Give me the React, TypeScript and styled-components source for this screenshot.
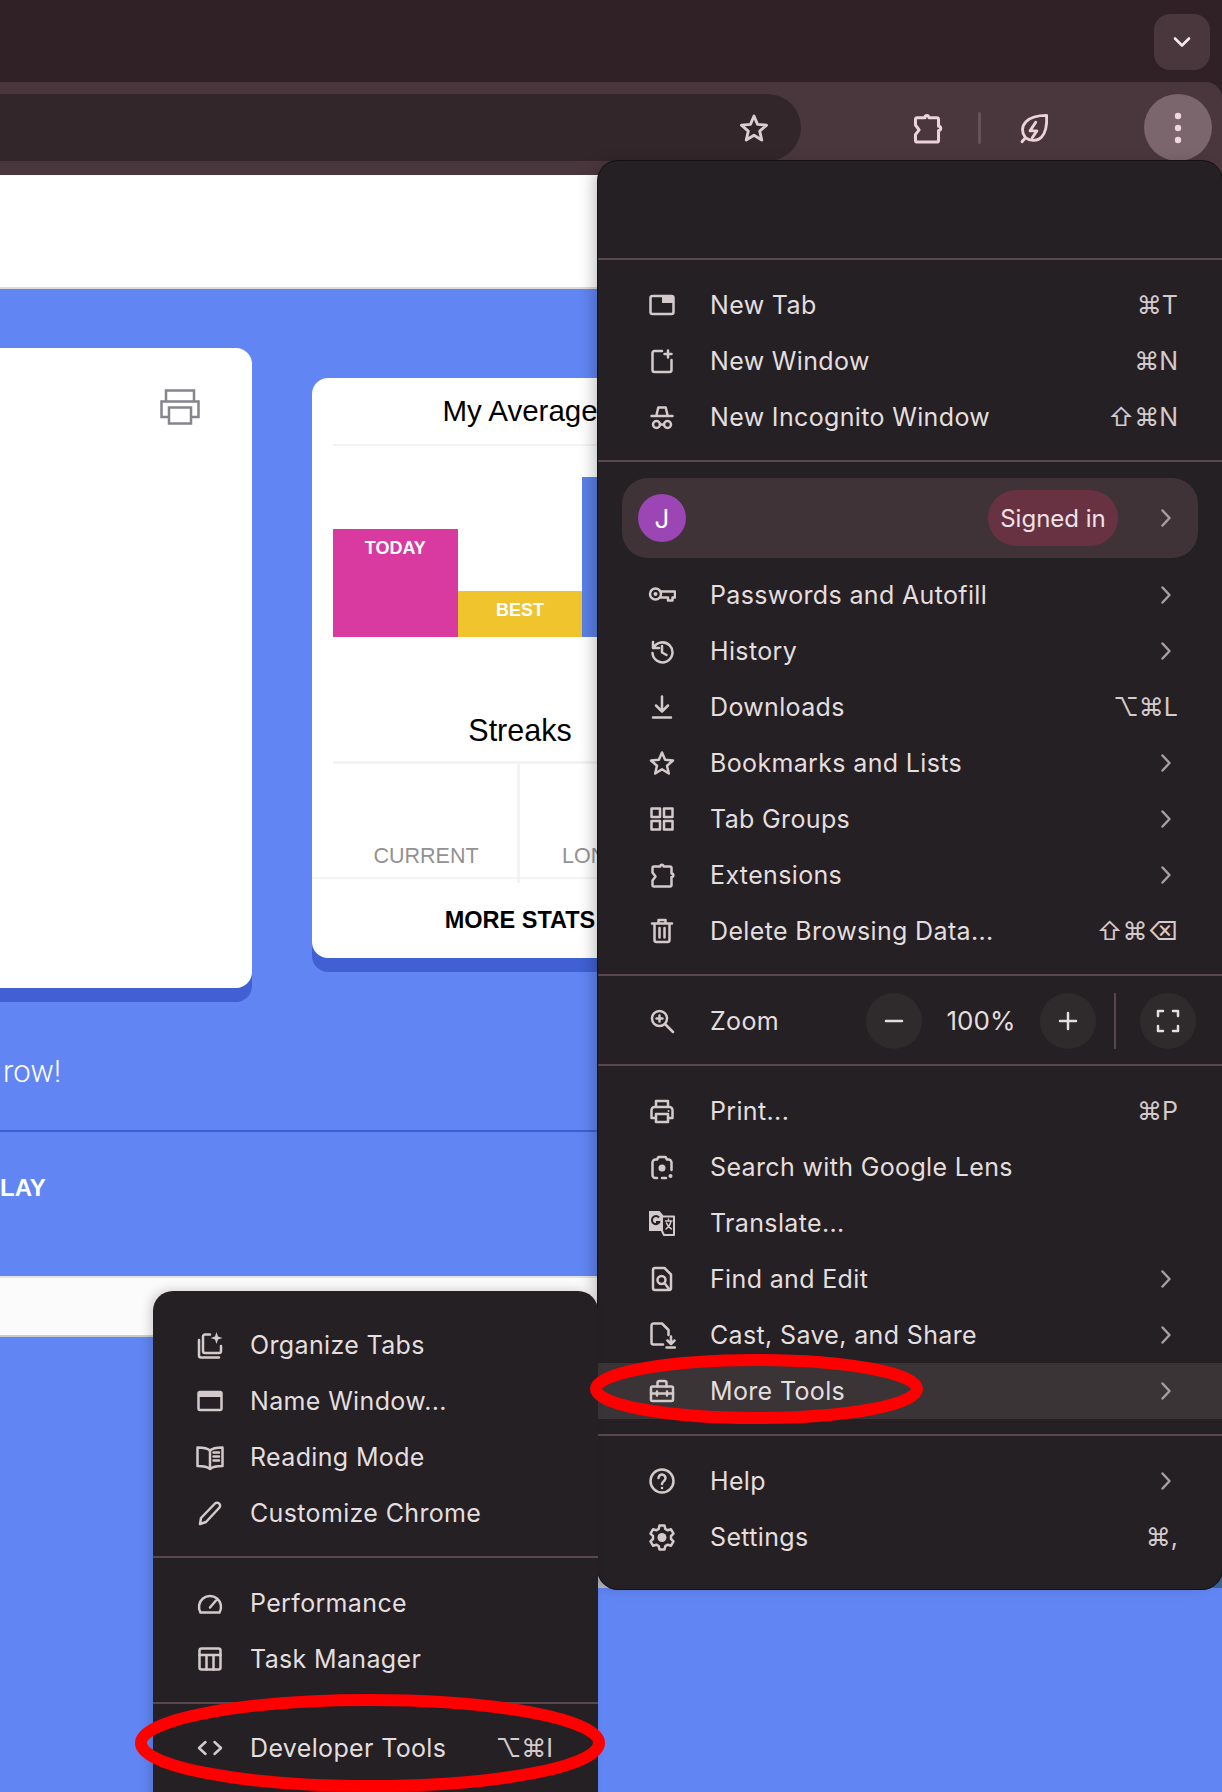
import React from 'react'
import styled, { createGlobalStyle } from 'styled-components'

const GlobalStyle = createGlobalStyle`
    html, body {
        margin: 0;
        padding: 0;
        background: #6186f3;
    }
`

const NEWS_FONT = `"Liberation Sans", Arial, sans-serif`
const MENU_FONT = `Inter, "DejaVu Sans", sans-serif`

const Page = styled.div`
    position: relative;
    width: 1222px;
    height: 1792px;
    overflow: hidden;
    background: #6186f3;
    font-family: ${NEWS_FONT};
`

/* browser chrome */

const BrowserBar = styled.header`
    background: #2f2125;
`

const TabStrip = styled.div`
    height: 82px;
    box-sizing: border-box;
    padding: 14px 12px 0 0;
    display: flex;
    justify-content: flex-end;
`

const TabSearch = styled.div`
    width: 56px;
    height: 56px;
    border-radius: 16px;
    background: #4a373d;
    color: #f3e9ec;
    display: grid;
    place-items: center;
`

const Toolbar = styled.div`
    height: 93px;
    box-sizing: border-box;
    padding: 12px 10px 0 0;
    display: flex;
    align-items: flex-start;
    background: #4a373d;
    border-top-right-radius: 16px;
`

const Omnibox = styled.div`
    width: 801px;
    height: 67px;
    box-sizing: border-box;
    padding-right: 31px;
    display: flex;
    align-items: center;
    justify-content: flex-end;
    background: #33262a;
    border-radius: 0 34px 34px 0;
    color: #dccdd1;
`

const ToolbarSlot = styled.div<{ $left: number }>`
    margin-left: ${(p) => p.$left}px;
    height: 67px;
    display: flex;
    align-items: center;
    color: #ecd2d9;
`

const ToolbarDivider = styled.div`
    width: 3px;
    height: 32px;
    background: #65525a;
    border-radius: 2px;
`

const DotsButton = styled.div`
    margin-left: auto;
    width: 68px;
    height: 67px;
    border-radius: 50%;
    background: #7a666c;
    color: #f0d8de;
    display: grid;
    place-items: center;
`

/* page behind the menus */

const HeaderBand = styled.div`
    height: 114px;
    box-sizing: border-box;
    background: #fff;
    border-bottom: 2px solid #dcdcdc;
`

const Stage = styled.main`
    height: 987px;
    box-sizing: border-box;
    padding-top: 59px;
`

const CardRow = styled.div`
    display: flex;
    align-items: flex-start;
    gap: 60px;
`

const PrintCard = styled.section`
    width: 252px;
    height: 640px;
    box-sizing: border-box;
    padding: 41px 52px 0 0;
    display: flex;
    justify-content: flex-end;
    align-items: flex-start;
    flex-shrink: 0;
    background: #fff;
    border-radius: 0 16px 16px 0;
    box-shadow: 0 14px 0 #4060d4;
    color: #85848f;
`

const StatsCard = styled.section`
    width: 416px;
    height: 580px;
    margin-top: 30px;
    flex-shrink: 0;
    display: flex;
    flex-direction: column;
    background: #fff;
    border-radius: 16px;
    box-shadow: 0 14px 0 #4060d4;
`

const CardTitle = styled.h2<{ $top: number; $height: number; $rule: number; $size: number }>`
    margin: ${(p) => p.$top}px 21px 0;
    height: ${(p) => p.$height}px;
    box-sizing: border-box;
    line-height: ${(p) => p.$height - p.$rule}px;
    border-bottom: ${(p) => p.$rule}px solid #f3f3f3;
    font-size: ${(p) => p.$size}px;
    font-weight: 400;
    text-align: center;
    color: #000;
`

const BarChart = styled.div`
    height: 191px;
    margin: 0 21px;
    display: flex;
    align-items: flex-end;
`

const Bar = styled.div<{ $height: number; $color: string }>`
    flex: 1;
    height: ${(p) => p.$height}px;
    background: ${(p) => p.$color};
    color: #fff;
    font-size: 18px;
    font-weight: 700;
    line-height: 38px;
    text-align: center;
`

const StreakGrid = styled.div`
    height: 113px;
    margin-left: 21px;
    display: grid;
    grid-template-columns: 184px 1fr;
`

const StreakCell = styled.div`
    display: flex;
    align-items: flex-end;
    justify-content: center;
    padding: 0 0 7px 2px;
    font-size: 21.5px;
    line-height: 28px;
    color: #929292;

    & + & {
        justify-content: flex-start;
        border-left: 3px solid #f3f3f3;
        margin-bottom: -6px;
        padding: 0 0 13px 42px;
    }
`

const MoreStats = styled.div`
    flex: 1;
    padding-top: 4px;
    border-top: 2px solid #f3f3f3;
    display: grid;
    place-items: center;
    font-size: 23.5px;
    font-weight: 700;
    color: #000;
`

const Note = styled.p`
    margin: 64px 0 0;
    padding-left: 3px;
    height: 40px;
    line-height: 40px;
    font-family: Roboto, sans-serif;
    font-weight: 300;
    font-size: 31px;
    color: #fff;
`

const Rule = styled.hr`
    margin: 38px 0;
    border: 0;
    border-top: 2px solid #3d5fd4;
`

const PlayLabel = styled.div`
    height: 36px;
    line-height: 36px;
    font-size: 24px;
    font-weight: 700;
    color: #fff;
`

const FooterStrip = styled.div`
    height: 61px;
    box-sizing: border-box;
    background: #fbfbfb;
    border-top: 2px solid #e4e4e4;
    border-bottom: 2px solid #cccccc;
`

/* chrome menus */

const MenuCorners = styled.div`
    position: absolute;
    top: 1569px;
    left: 598px;
    width: 624px;
    height: 19px;
    background: linear-gradient(90deg, #b4b9c6 0 22px, #252023 22px 600px, #3f6391 600px);
`

const MainMenu = styled.nav`
    position: absolute;
    top: 161px;
    left: 598px;
    width: 624px;
    height: 1428px;
    display: flex;
    flex-direction: column;
    background: #252023;
    border-radius: 20px;
    box-shadow: 0 0 0 1px #141113, -8px 0 16px -4px rgba(0, 0, 0, 0.25);
    font-family: ${MENU_FONT};
`

const SubMenu = styled.nav`
    position: absolute;
    top: 1291px;
    left: 153px;
    width: 445px;
    height: 540px;
    padding-top: 26px;
    box-sizing: border-box;
    display: flex;
    flex-direction: column;
    background: #252023;
    border-radius: 20px;
    box-shadow: -4px -2px 12px -2px rgba(0, 0, 0, 0.2);
    font-family: ${MENU_FONT};
`

const MenuTop = styled.div`
    height: 97px;
`

const WindowGroup = styled.div`
    padding-bottom: 15px;
`

const Section = styled.div<{ $top: number; $bottom: number }>`
    padding: ${(p) => p.$top}px 0 ${(p) => p.$bottom}px;
    border-top: 2px solid #5a474d;
`

const Row = styled.div<{ $active?: boolean; $sub?: boolean }>`
    height: 56px;
    box-sizing: border-box;
    padding: 0 ${(p) => (p.$sub ? 45 : 44)}px 0 ${(p) => (p.$sub ? 43 : 50)}px;
    display: flex;
    align-items: center;
    gap: ${(p) => (p.$sub ? 26 : 34)}px;
    background: ${(p) => (p.$active ? '#3a3437' : 'transparent')};
    color: #e3dedf;
`

const RowIcon = styled.span`
    width: 28px;
    height: 28px;
    flex-shrink: 0;
    color: #d4c9cb;
`

const RowLabel = styled.span`
    flex: 1;
    font-size: 25px;
    letter-spacing: 0.35px;
    white-space: nowrap;
`

const Shortcut = styled.span`
    font-size: 25px;
    letter-spacing: 0;
    color: #d4c9cb;
    white-space: nowrap;
`

const RowArrow = styled.span`
    width: 12px;
    height: 22px;
    margin-right: 6px;
    color: #a89ea0;
`

const ProfileRow = styled.div`
    height: 80px;
    margin: 0 24px 9px;
    box-sizing: border-box;
    padding: 0 20px 0 16px;
    display: flex;
    align-items: center;
    border-radius: 26px;
    background: #3f3337;
`

const Avatar = styled.div`
    width: 48px;
    height: 48px;
    border-radius: 50%;
    background: #9c46b5;
    color: #fff;
    font-size: 26px;
    display: grid;
    place-items: center;
`

const SignedIn = styled.div`
    margin-left: auto;
    margin-right: 42px;
    width: 130px;
    height: 56px;
    border-radius: 28px;
    background: #683242;
    color: #eee2e5;
    font-size: 24px;
    display: grid;
    place-items: center;
`

const ZoomRow = styled.div`
    height: 87px;
    box-sizing: border-box;
    padding-left: 50px;
    display: flex;
    align-items: center;
    color: #e3dedf;
`

const ZoomLabel = styled.span`
    margin-left: 34px;
    width: 156px;
    font-size: 25px;
    letter-spacing: 0.35px;
`

const ZoomButton = styled.div`
    width: 56px;
    height: 56px;
    flex-shrink: 0;
    border-radius: 50%;
    background: #2f2a2b;
    display: grid;
    place-items: center;
    color: #e3dedf;
`

const ZoomValue = styled.span`
    width: 118px;
    text-align: center;
    font-size: 26px;
`

const ZoomDivider = styled.div`
    width: 2px;
    height: 56px;
    margin: 0 24px 0 18px;
    background: #5a474d;
`

const Annotations = styled.svg`
    position: absolute;
    top: 0;
    left: 0;
    width: 1222px;
    height: 1792px;
    pointer-events: none;
`

/* icons, all on a 28 unit grid */

const Glyph = styled.svg`
    display: block;
    fill: none;
    stroke: currentColor;
    stroke-width: 2.5;
    stroke-linecap: round;
    stroke-linejoin: round;
`

const icons: Record<string, React.ReactNode> = {
    newTab: (
        <>
            <rect x="2.500" y="5" width="23" height="18" rx="2" />
            <path d="M14 5h9.500a2 2 0 0 1 2 2v5H14z" fill="currentColor" stroke="none" />
        </>
    ),
    newWindow: (
        <path d="M14 4H6.500a2 2 0 0 0-2 2v17a2 2 0 0 0 2 2h15a2 2 0 0 0 2-2V13M20 3.500v7M16.500 7h7" />
    ),
    incognito: (
        <>
            <path d="M8.500 12l1.800-7.500h7.400L19.500 12M3.500 13h21M12 21.500h4" />
            <circle cx="8.500" cy="21.500" r="3.500" />
            <circle cx="19.500" cy="21.500" r="3.500" />
        </>
    ),
    key: (
        <>
            <circle cx="7.500" cy="13" r="5.500" />
            <circle cx="7.500" cy="13" r="2" fill="currentColor" stroke="none" />
            <path d="M13 10.500h14v6h-2.500v3h-4.500v-3h-7" />
        </>
    ),
    history: <path d="M5 5v6h6M5.500 11a10 10 0 1 1-1 5M14 9v6.500l4.500 2.500" />,
    download: <path d="M14 3.500v15M8 12.500l6 6 6-6M5 24.500h18" />,
    star: (
        <path d="M14 3.500l3.100 7.300 7.900.7-6 5.200 1.800 7.800L14 20.300l-6.800 4.200 1.800-7.800-6-5.200 7.900-.7z" />
    ),
    tabGroups: (
        <>
            <rect x="3.500" y="3.500" width="8.500" height="8.500" />
            <rect x="16" y="3.500" width="8.500" height="8.500" />
            <rect x="3.500" y="16" width="8.500" height="8.500" />
            <rect x="16" y="16" width="8.500" height="8.500" />
        </>
    ),
    puzzle: (
        <path d="M6 5.500h6.300a1.700 1.700 0 0 1 3.400 0H22A1.500 1.500 0 0 1 23.500 7v5.500a1.800 1.800 0 0 1 0 3.600V24a1.500 1.500 0 0 1-1.500 1.500H6A1.500 1.500 0 0 1 4.500 24v-4.500l3-4-3-4V7A1.500 1.500 0 0 1 6 5.500z" />
    ),
    trash: (
        <path d="M4 6.500h20M10.500 6.500V3h7v3.500M6.500 6.500V23a2 2 0 0 0 2 2h11a2 2 0 0 0 2-2V6.500M11.500 11v9.500M16.500 11v9.500" />
    ),
    zoom: (
        <>
            <circle cx="11.500" cy="11.500" r="7.500" />
            <path d="M17 17l8 8M11.500 8.500v6M8.500 11.500h6" />
        </>
    ),
    print: (
        <>
            <path d="M8 10V4h12v6M8 21H3.500v-8a3 3 0 0 1 3-3h15a3 3 0 0 1 3 3v8H20" />
            <rect x="8" y="17" width="12" height="8" />
            <circle cx="20.500" cy="14" r="1" fill="currentColor" stroke="none" />
        </>
    ),
    lens: (
        <>
            <path d="M9 25H7.500a3 3 0 0 1-3-3V9.500a3 3 0 0 1 3-3H9l1.500-2.500h7L19 6.500h1.500a3 3 0 0 1 3 3V17M14 25h4" />
            <circle cx="14" cy="15" r="3.500" fill="currentColor" stroke="none" />
            <circle cx="22.500" cy="23" r="2" fill="currentColor" stroke="none" />
        </>
    ),
    translate: (
        <>
            <path d="M1 2h10.500L15 6v16H1z" fill="currentColor" stroke="none" />
            <path d="M11 8.500a4 4 0 1 0 .5 4.500H8" stroke="#252023" strokeWidth="2" strokeLinecap="butt" />
            <path d="M15 7.500h11v18.500H16l-2-4" strokeWidth="2" />
            <path d="M17.500 12h6.500M20.500 10v2M23 12c-.8 4-2.800 6.500-5 8M18.500 14c1 2.800 3 5 5 6" strokeWidth="1.500" />
        </>
    ),
    find: (
        <>
            <path d="M7 3h9.500l6.500 6.500V23a2 2 0 0 1-2 2H7a2 2 0 0 1-2-2V5a2 2 0 0 1 2-2z" />
            <circle cx="13.500" cy="15" r="4" />
            <path d="M16.500 18l4.500 6" />
        </>
    ),
    cast: (
        <path d="M15 23.500H5.500a2 2 0 0 1-2-2V4.500a2 2 0 0 1 2-2H14l6.500 6.500V14M23 15.500v7M19.500 19.500l3.500 3.500 3.500-3.500M18.500 26.500H27" />
    ),
    toolbox: (
        <>
            <path d="M9.500 9.500V6a2 2 0 0 1 2-2h5a2 2 0 0 1 2 2v3.500" />
            <rect x="3" y="9.500" width="22" height="14.500" rx="1.500" />
            <path d="M3 16.500h22M9 14.500v4M19 14.500v4" />
        </>
    ),
    help: (
        <>
            <circle cx="14" cy="14" r="11.500" />
            <path d="M10.500 11a3.500 3.500 0 1 1 6 2.500c-1.300 1.200-2.500 1.800-2.500 3.500" />
            <circle cx="14" cy="21" r="1.300" fill="currentColor" stroke="none" />
        </>
    ),
    settings: (
        <>
            <path d="M11.500 2.500h5l.8 3.400 2.400 1.400 3.300-1 2.500 4.300-2.500 2.400v3l2.500 2.400-2.500 4.300-3.300-1-2.400 1.400-.8 3.400h-5l-.8-3.400-2.400-1.400-3.300 1L2.500 18.400 5 16v-3l-2.500-2.400L5 6.300l3.300 1 2.400-1.400z" />
            <circle cx="14" cy="14.500" r="4.500" fill="currentColor" stroke="none" />
        </>
    ),
    organize: (
        <>
            <path d="M3 9v15.500a2 2 0 0 0 2 2h18M14 3.500H9a2 2 0 0 0-2 2V20a2 2 0 0 0 2 2h14a2 2 0 0 0 2-2v-5" />
            <path d="M20.500 1l1.500 4.500 4.500 1.500L22 8.500 20.500 13 19 8.500 14.500 7 19 5.500z" fill="currentColor" stroke="none" />
        </>
    ),
    nameWindow: (
        <>
            <rect x="2.500" y="5" width="23" height="18" rx="1.500" />
            <path d="M2.500 5h23v5h-23z" fill="currentColor" stroke="none" />
        </>
    ),
    book: (
        <path d="M14 7.500C12 5.500 7.500 4.500 1.500 4.500V23c6 0 10.500 1 12.500 3 2-2 6.500-3 12.500-3V4.500C20.500 4.500 16 5.500 14 7.500zM14 7.500V26M17.500 9.500h5.500M17.500 13.500h5.500M17.500 17.500h5.500" />
    ),
    pencil: <path d="M4 25l1-6L19 4.500a2.800 2.800 0 0 1 4 0 2.800 2.800 0 0 1 .5 4L10 23z" />,
    gauge: <path d="M4.500 23.500a11 11 0 1 1 19 0zM14 18.500l6-7" />,
    taskManager: (
        <>
            <rect x="3.500" y="3.500" width="21" height="21" rx="2" />
            <path d="M3.500 10h21M10.500 10v14.500M17.500 10v14.500" />
        </>
    ),
    code: <path d="M9.500 8l-6.500 6 6.500 6M18.500 8l6.500 6-6.500 6" />,
    leaf: (
        <path d="M3.500 26l3-3.500C3 18 3 12.500 7 8.500 11 4.500 18 3 25 3c.5 8-.5 15-4.500 19-3.500 3.500-9.500 4-14 .5M15.500 9l-5 7.500h6l-4 6" />
    ),
}

const Icon = ({ name, size = 28 }: { name: string; size?: number }) => (
    <Glyph viewBox="0 0 28 28" width={size} height={size}>
        {icons[name]}
    </Glyph>
)

const Chevron = () => (
    <Glyph viewBox="0 0 12 22" width={12} height={22}>
        <path d="M2.500 3.500l7 7.500-7 7.500" />
    </Glyph>
)

type Item = { icon: string; label: string; shortcut?: string; arrow?: boolean; active?: boolean }

const MenuRow = ({ item, sub }: { item: Item; sub?: boolean }) => (
    <Row $active={item.active} $sub={sub}>
        <RowIcon>
            <Icon name={item.icon} />
        </RowIcon>
        <RowLabel>{item.label}</RowLabel>
        {item.shortcut && <Shortcut>{item.shortcut}</Shortcut>}
        {item.arrow && (
            <RowArrow>
                <Chevron />
            </RowArrow>
        )}
    </Row>
)

const newItems: Item[] = [
    { icon: 'newTab', label: 'New Tab', shortcut: '⌘T' },
    { icon: 'newWindow', label: 'New Window', shortcut: '⌘N' },
    { icon: 'incognito', label: 'New Incognito Window', shortcut: '⇧⌘N' },
]

const profileItems: Item[] = [
    { icon: 'key', label: 'Passwords and Autofill', arrow: true },
    { icon: 'history', label: 'History', arrow: true },
    { icon: 'download', label: 'Downloads', shortcut: '⌥⌘L' },
    { icon: 'star', label: 'Bookmarks and Lists', arrow: true },
    { icon: 'tabGroups', label: 'Tab Groups', arrow: true },
    { icon: 'puzzle', label: 'Extensions', arrow: true },
    { icon: 'trash', label: 'Delete Browsing Data...', shortcut: '⇧⌘⌫' },
]

const pageItems: Item[] = [
    { icon: 'print', label: 'Print...', shortcut: '⌘P' },
    { icon: 'lens', label: 'Search with Google Lens' },
    { icon: 'translate', label: 'Translate...' },
    { icon: 'find', label: 'Find and Edit', arrow: true },
    { icon: 'cast', label: 'Cast, Save, and Share', arrow: true },
    { icon: 'toolbox', label: 'More Tools', arrow: true, active: true },
]

const helpItems: Item[] = [
    { icon: 'help', label: 'Help', arrow: true },
    { icon: 'settings', label: 'Settings', shortcut: '⌘,' },
]

const windowItems: Item[] = [
    { icon: 'organize', label: 'Organize Tabs' },
    { icon: 'nameWindow', label: 'Name Window...' },
    { icon: 'book', label: 'Reading Mode' },
    { icon: 'pencil', label: 'Customize Chrome' },
]

const perfItems: Item[] = [
    { icon: 'gauge', label: 'Performance' },
    { icon: 'taskManager', label: 'Task Manager' },
]

const devItems: Item[] = [{ icon: 'code', label: 'Developer Tools', shortcut: '⌥⌘I' }]

const App = () => {
    return (
        <Page>
            <GlobalStyle />
            <BrowserBar>
                <TabStrip>
                    <TabSearch>
                        <Glyph viewBox="0 0 20 20" width={20} height={20}>
                            <path d="M3 6.500l7 7 7-7" strokeWidth="2.600" />
                        </Glyph>
                    </TabSearch>
                </TabStrip>
                <Toolbar>
                    <Omnibox>
                        <Icon name="star" size={32} />
                    </Omnibox>
                    <ToolbarSlot $left={109}>
                        <Icon name="puzzle" size={34} />
                    </ToolbarSlot>
                    <ToolbarSlot $left={34}>
                        <ToolbarDivider />
                    </ToolbarSlot>
                    <ToolbarSlot $left={37}>
                        <Icon name="leaf" size={32} />
                    </ToolbarSlot>
                    <DotsButton>
                        <svg viewBox="0 0 8 32" width={8} height={32} fill="currentColor">
                            <circle cx="4" cy="4" r="3.200" />
                            <circle cx="4" cy="16" r="3.200" />
                            <circle cx="4" cy="28" r="3.200" />
                        </svg>
                    </DotsButton>
                </Toolbar>
            </BrowserBar>

            <HeaderBand />
            <Stage>
                <CardRow>
                    <PrintCard>
                        <svg viewBox="0 0 40 36" width={40} height={36} fill="none" stroke="currentColor" strokeWidth="2.500">
                            <path d="M6 12V1.500h28V12M9 28H1.500V12.500h37V28H31" />
                            <rect x="9" y="18.500" width="22" height="16" />
                        </svg>
                    </PrintCard>
                    <StatsCard>
                        <CardTitle $top={0} $height={68} $rule={2} $size={29.5}>
                            My Average
                        </CardTitle>
                        <BarChart>
                            <Bar $height={108} $color="#d93a9f">
                                TODAY
                            </Bar>
                            <Bar $height={46} $color="#f0c42d">
                                BEST
                            </Bar>
                            <Bar $height={160} $color="#5a80e6" />
                        </BarChart>
                        <CardTitle $top={62} $height={65} $rule={3} $size={30.5}>
                            Streaks
                        </CardTitle>
                        <StreakGrid>
                            <StreakCell>CURRENT</StreakCell>
                            <StreakCell>LONGEST</StreakCell>
                        </StreakGrid>
                        <MoreStats>MORE STATS</MoreStats>
                    </StatsCard>
                </CardRow>
                <Note>row!</Note>
                <Rule />
                <PlayLabel>LAY</PlayLabel>
            </Stage>
            <FooterStrip />

            <MenuCorners />
            <MainMenu>
                <MenuTop />
                <Section $top={17} $bottom={15}>
                    {newItems.map((item) => (
                        <MenuRow key={item.label} item={item} />
                    ))}
                </Section>
                <Section $top={16} $bottom={15}>
                    <ProfileRow>
                        <Avatar>J</Avatar>
                        <SignedIn>Signed in</SignedIn>
                        <RowArrow>
                            <Chevron />
                        </RowArrow>
                    </ProfileRow>
                    {profileItems.map((item) => (
                        <MenuRow key={item.label} item={item} />
                    ))}
                </Section>
                <Section $top={1} $bottom={0}>
                    <ZoomRow>
                        <RowIcon>
                            <Icon name="zoom" />
                        </RowIcon>
                        <ZoomLabel>Zoom</ZoomLabel>
                        <ZoomButton>
                            <Glyph viewBox="0 0 20 20" width={20} height={20}>
                                <path d="M2 10h16" />
                            </Glyph>
                        </ZoomButton>
                        <ZoomValue>100%</ZoomValue>
                        <ZoomButton>
                            <Glyph viewBox="0 0 20 20" width={20} height={20}>
                                <path d="M2 10h16M10 2v16" />
                            </Glyph>
                        </ZoomButton>
                        <ZoomDivider />
                        <ZoomButton>
                            <Glyph viewBox="0 0 26 26" width={26} height={26}>
                                <path d="M3 8V3h5M18 3h5v5M23 18v5h-5M8 23H3v-5" />
                            </Glyph>
                        </ZoomButton>
                    </ZoomRow>
                </Section>
                <Section $top={17} $bottom={15}>
                    {pageItems.map((item) => (
                        <MenuRow key={item.label} item={item} />
                    ))}
                </Section>
                <Section $top={17} $bottom={0}>
                    {helpItems.map((item) => (
                        <MenuRow key={item.label} item={item} />
                    ))}
                </Section>
            </MainMenu>

            <SubMenu>
                <WindowGroup>
                    {windowItems.map((item) => (
                        <MenuRow key={item.label} item={item} sub />
                    ))}
                </WindowGroup>
                <Section $top={17} $bottom={15}>
                    {perfItems.map((item) => (
                        <MenuRow key={item.label} item={item} sub />
                    ))}
                </Section>
                <Section $top={16} $bottom={0}>
                    {devItems.map((item) => (
                        <MenuRow key={item.label} item={item} sub />
                    ))}
                </Section>
            </SubMenu>

            <Annotations viewBox="0 0 1222 1792" fill="none" stroke="#ff0000" strokeWidth="12">
                <ellipse cx="756.500" cy="1389" rx="160.500" ry="29" />
                <ellipse cx="370" cy="1743" rx="229" ry="43" />
            </Annotations>
        </Page>
    )
}

export default App
